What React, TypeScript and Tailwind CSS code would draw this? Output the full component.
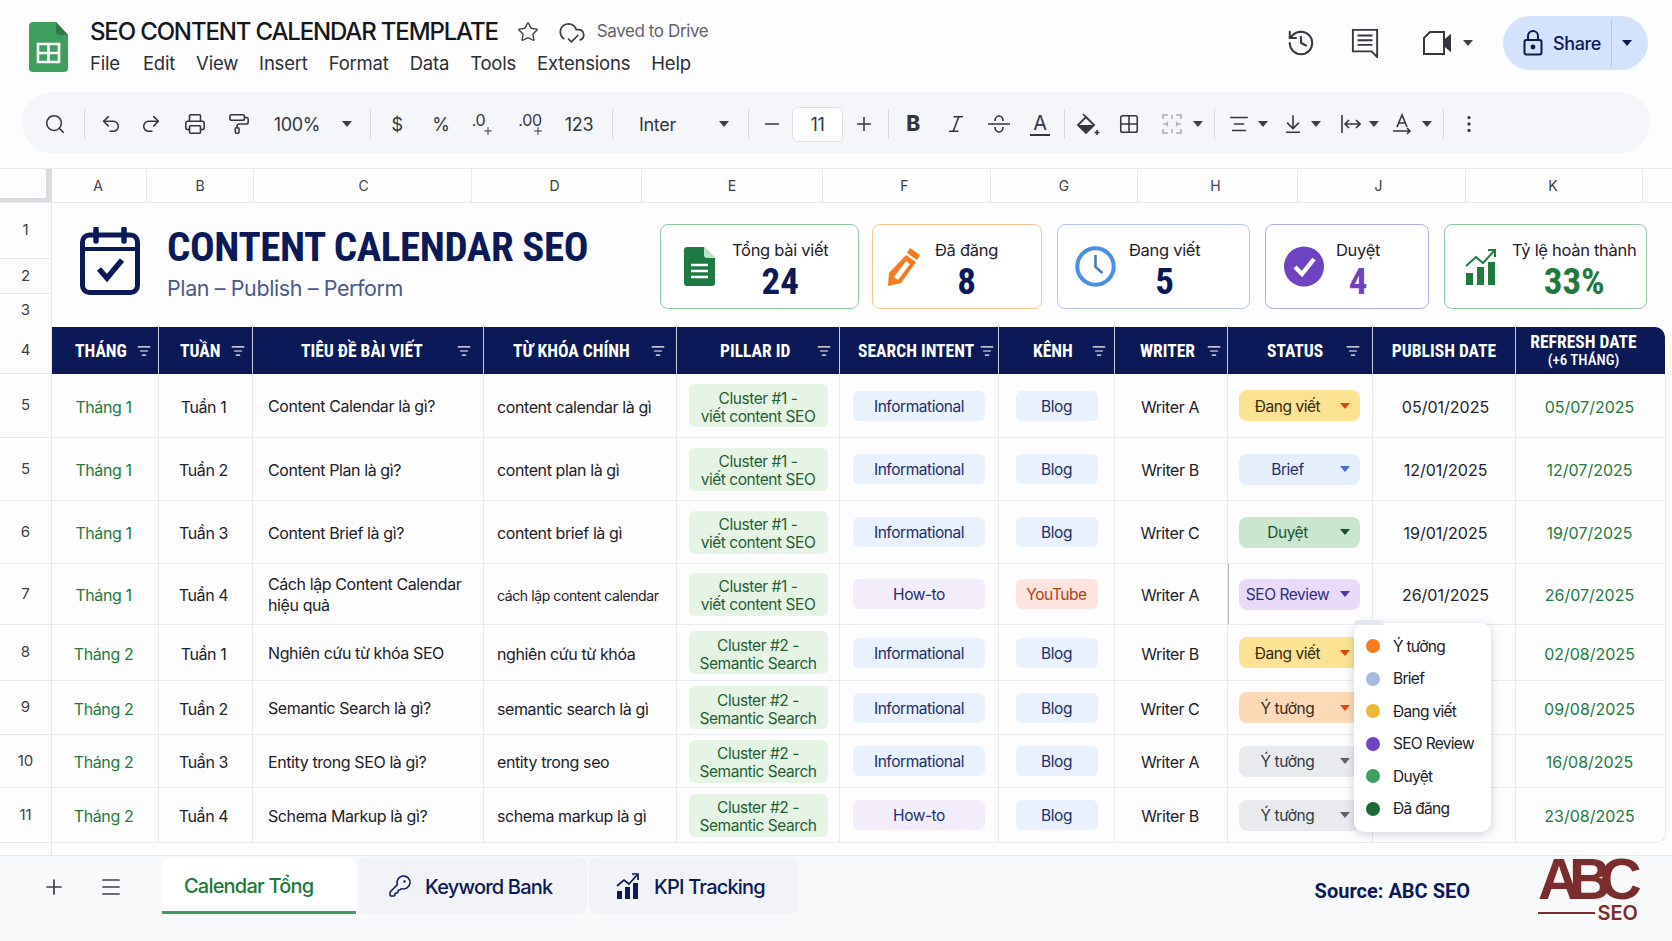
import type { ReactNode } from "react";
import {
  ArrowDownToLine,
  AlignCenter,
  CloudCheck,
  EllipsisVertical,
  Grid2x2,
  History,
  Italic,
  KeyRound,
  ListFilter,
  Menu,
  Minus,
  PaintRoller,
  Plus,
  Printer,
  Redo2,
  Search,
  Star,
  Undo2,
} from "lucide-react";

const NARROW = "font-['Roboto',sans-serif] font-bold [font-stretch:75%]";
const NAVY = "text-[#0b1a57]";

function Caret({ className = "text-[#3c4043]" }: { className?: string }) {
  return (
    <svg viewBox="0 0 10 6" className={`h-[6px] w-[10px] flex-none ${className}`}>
      <path d="M0 0h10L5 6z" fill="currentColor" />
    </svg>
  );
}

function Sep({ className }: { className: string }) {
  return (
    <div className={`flex h-full flex-none items-center justify-center ${className}`}>
      <div className="h-[30px] w-px bg-[#d7dae0]" />
    </div>
  );
}

function Tool({ className, children }: { className: string; children: ReactNode }) {
  return <div className={`flex h-full flex-none items-center justify-center text-[#33373d] ${className}`}>{children}</div>;
}

function Toolbar() {
  const ic = { size: 22, strokeWidth: 1.7 };
  return (
    <div className="mx-[22px] flex h-[61px] items-center rounded-full bg-[#f5f6f9] pl-[18px] pt-[3px] text-[18px] tracking-[-0.3px]">
      <Tool className="w-[30px]"><Search {...ic} /></Tool>
      <Sep className="w-[28px]" />
      <Tool className="w-[26px]"><Undo2 {...ic} /></Tool>
      <Tool className="ml-[7px] w-[40px]"><Redo2 {...ic} /></Tool>
      <Tool className="ml-[2px] w-[44px]"><Printer {...ic} /></Tool>
      <Tool className="w-[44px]"><PaintRoller {...ic} /></Tool>
      <Tool className="w-[72px]">100%</Tool>
      <Tool className="w-[28px]"><Caret /></Tool>
      <Sep className="w-[18px]" />
      <Tool className="w-[36px]">$</Tool>
      <Tool className="w-[52px]">%</Tool>
      <Tool className="w-[32px]">
        <span className="flex items-start text-[16px] leading-none">.0<Plus size={12} strokeWidth={2} className="mt-[13px] -ml-[3px]" /></span>
      </Tool>
      <Tool className="w-[64px]">
        <span className="flex items-start text-[16px] leading-none">.00<Plus size={12} strokeWidth={2} className="mt-[13px] -ml-[10px]" /></span>
      </Tool>
      <Tool className="w-[32px]">123</Tool>
      <Sep className="w-[34px]" />
      <Tool className="w-[74px] justify-start pl-[10px]">Inter</Tool>
      <Tool className="w-[42px]"><Caret /></Tool>
      <Sep className="w-[6px]" />
      <Tool className="w-[41px]"><Minus {...ic} /></Tool>
      <div className="flex h-[35px] w-[51px] flex-none items-center justify-center rounded-md border border-[#dcdfe4] bg-white text-[#33373d]">11</div>
      <Tool className="w-[42px]"><Plus {...ic} /></Tool>
      <Sep className="w-[6px]" />
      <Tool className="w-[44px] text-[21px] font-extrabold">B</Tool>
      <Tool className="w-[42px]"><Italic {...ic} /></Tool>
      <Tool className="w-[44px]">
        <svg viewBox="0 0 24 24" className="h-[24px] w-[24px]" fill="none" stroke="currentColor" strokeWidth="1.7">
          <path d="M8 9a4 5 0 0 1 8 0M1 12h22M8 15a4 5 0 0 0 8 0" />
        </svg>
      </Tool>
      <Tool className="w-[38px]">
        <span className="border-b-2 border-[#33373d] px-[3px] text-[20px] leading-[22px]">A</span>
      </Tool>
      <Sep className="w-[10px]" />
      <Tool className="w-[38px]">
        <svg viewBox="0 0 24 24" className="h-[24px] w-[24px]">
          <path d="M10 5l8 8-8 8-8-8z" fill="none" stroke="currentColor" strokeWidth="1.8" />
          <path d="M2 13h16l-8 8z" fill="currentColor" />
          <path d="M7 2l3 3M21 18v5M18.5 20.5h5" fill="none" stroke="currentColor" strokeWidth="1.6" />
        </svg>
      </Tool>
      <Tool className="w-[44px]"><Grid2x2 {...ic} /></Tool>
      <Tool className="w-[42px]">
        <svg viewBox="0 0 22 22" className="h-[22px] w-[22px] text-[#aab0be]" fill="none" stroke="currentColor" strokeWidth="1.6">
          <path d="M2 6V2h5M15 2h5v4M20 16v4h-5M7 20H2v-4M2 11h5M15 11h5M11 2v4M11 16v4M5 11l2-2M5 11l2 2M17 11l-2-2M17 11l-2 2" />
        </svg>
      </Tool>
      <Tool className="w-[10px]"><Caret /></Tool>
      <Sep className="w-[22px]" />
      <Tool className="w-[28px]"><AlignCenter {...ic} /></Tool>
      <Tool className="w-[20px]"><Caret /></Tool>
      <Tool className="ml-[2px] w-[36px]"><ArrowDownToLine {...ic} /></Tool>
      <Tool className="w-[10px]"><Caret /></Tool>
      <Tool className="ml-[14px] w-[30px]">
        <svg viewBox="0 0 22 22" className="h-[22px] w-[22px]" fill="none" stroke="currentColor" strokeWidth="1.6">
          <path d="M3 2v18M7 11h13M10 7l-4 4 4 4M17 7l4 4-4 4" />
        </svg>
      </Tool>
      <Tool className="w-[18px]"><Caret /></Tool>
      <Tool className="w-[38px]">
        <svg viewBox="0 0 22 22" className="h-[22px] w-[22px]" fill="none" stroke="currentColor" strokeWidth="1.6">
          <path d="M6 14L11 2l5 12M7.5 10h7M2 18h17M16 15l3 3-3 3" />
        </svg>
      </Tool>
      <Tool className="w-[12px]"><Caret /></Tool>
      <Sep className="w-[20px]" />
      <Tool className="w-[32px]"><EllipsisVertical {...ic} /></Tool>
    </div>
  );
}

function TopBar() {
  const menu = ["Edit", "View", "Insert", "Format", "Data", "Tools", "Extensions", "Help"];
  return (
    <header className="flex h-[92px] items-start pl-[29px] pr-[24px] pt-[16px]">
      <svg viewBox="0 0 39 50" className="mt-[6px] h-[50px] w-[39px] flex-none">
        <path d="M4 0h23l12 13v33a4 4 0 0 1-4 4H4a4 4 0 0 1-4-4V4a4 4 0 0 1 4-4z" fill="#3f9f5f" />
        <path d="M27 0l12 13H30a3 3 0 0 1-3-3z" fill="#2c7a47" />
        <path d="M9 22h21v18H9z" fill="none" stroke="#fff" strokeWidth="2.6" />
        <path d="M19.5 22v18M9 31h21" stroke="#fff" strokeWidth="2.6" />
      </svg>
      <div className="ml-[22px]">
        <div className="flex h-[32px] items-center">
          <span className="text-[24px] font-medium tracking-[-1.15px] text-[#15171c]">SEO CONTENT CALENDAR TEMPLATE</span>
          <Star size={22} strokeWidth={1.5} className="ml-[19px] text-[#3c4043]" />
          <CloudCheck size={28} strokeWidth={1.5} className="ml-[19px] text-[#3c4043]" />
          <span className="ml-[11px] text-[17px] tracking-[-0.4px] text-[#5f6368]">Saved to Drive</span>
        </div>
        <nav className="mt-[2px] flex gap-[21px] text-[18.5px] tracking-[-0.2px] text-[#2b2f36]">
          <span className="mr-[2px]">File</span>
          {menu.map((m) => (
            <span key={m}>{m}</span>
          ))}
        </nav>
      </div>
      <div className="ml-auto flex items-center text-[#33373d]">
        <History size={30} strokeWidth={1.6} />
        <svg viewBox="0 0 30 32" className="ml-[35px] h-[30px] w-[28px]" fill="none" stroke="currentColor" strokeWidth="2">
          <path d="M2 2h26v29l-6-6H2z" />
          <path d="M7 8h16M7 13h16M7 18h16" />
        </svg>
        <svg viewBox="0 0 28 24" className="ml-[44px] h-[24px] w-[28px]" fill="none" stroke="currentColor" strokeWidth="2">
          <path d="M7 1h14v22H1V7z" />
          <path d="M21 10l6-5v14l-6-5z" fill="currentColor" />
        </svg>
        <Caret className="ml-[12px] text-[#3c4043]" />
        <div className={`ml-[30px] flex h-[54px] w-[145px] items-center rounded-full bg-[#d3e3fd] pl-[20px] ${NAVY}`}>
          <svg viewBox="0 0 20 26" className="h-[26px] w-[20px] flex-none" fill="none" stroke="currentColor" strokeWidth="2">
            <rect x="1.5" y="10" width="17" height="14.5" rx="2" />
            <path d="M5 10V6a5 5 0 0 1 10 0v4" />
            <circle cx="10" cy="17" r="1.4" fill="currentColor" />
          </svg>
          <span className="ml-[10px] text-[18px] font-medium tracking-[-0.4px]">Share</span>
          <div className="ml-[10px] h-[48px] w-px bg-[#b7c7e2]" />
          <Caret className={`ml-[10px] ${NAVY}`} />
        </div>
      </div>
    </header>
  );
}

function ColumnLetters() {
  const cols = [
    ["A", "w-[95px] pr-[2px]"],
    ["B", "w-[107px]"],
    ["C", "w-[218px] pl-[2px]"],
    ["D", "w-[170px] pr-[4px]"],
    ["E", "w-[181px]"],
    ["F", "w-[168px] pr-[4px]"],
    ["G", "w-[147px]"],
    ["H", "w-[160px] pr-[4px]"],
    ["J", "w-[168px] pr-[6px]"],
    ["K", "w-[177px] pr-[2px]"],
  ];
  return (
    <div className="mt-[15px] flex h-[35px] border-y border-[#e6e8ec] text-[14px] text-[#3c4043]">
      <div className="h-full w-[52px] flex-none border-r-[6px] border-b-[4px] border-[#d8dbe0]" />
      {cols.map(([c, w]) => (
        <div key={c} className={`flex flex-none items-center justify-center border-r border-[#e6e8ec] ${w}`}>
          {c}
        </div>
      ))}
    </div>
  );
}

function RowNum({ n, className }: { n: number; className: string }) {
  return (
    <div className={`flex w-[52px] flex-none items-center justify-center border-r border-b border-[#e6e8ec] text-[15px] text-[#3c4043] ${className}`}>
      {n}
    </div>
  );
}

type Kpi = { label: string; value: string; tone: string; cls: string; icon: ReactNode };

const kpis: Kpi[] = [
  {
    label: "Tổng bài viết",
    value: "24",
    tone: NAVY,
    cls: "mr-[13px] w-[199px] border-[#8fc9a1] pl-[23px]",
    icon: (
      <svg viewBox="0 0 31 39" className="mr-[17px] h-[39px] w-[31px] flex-none">
        <path d="M3 0h17l11 11v25a3 3 0 0 1-3 3H3a3 3 0 0 1-3-3V3a3 3 0 0 1 3-3z" fill="#1e7a42" />
        <path d="M20 0l11 11h-8a3 3 0 0 1-3-3z" fill="#bfe0ca" />
        <path d="M7 18h17M7 24h17M7 30h17" stroke="#fff" strokeWidth="2.6" />
      </svg>
    ),
  },
  {
    label: "Đã đăng",
    value: "8",
    tone: NAVY,
    cls: "mr-[15px] w-[170px] border-[#f9c58d] pl-[13px]",
    icon: (
      <svg viewBox="0 0 35 39" className="mr-[14px] h-[39px] w-[35px] flex-none">
        <path d="M24 1l10 7-3 5-10-7z" fill="#f47b20" />
        <path d="M20 8l10 7-15 21-13 3 1-13z" fill="#f47b20" />
        <path d="M20 14l4 3-12 16-4-3z" fill="#fff" />
      </svg>
    ),
  },
  {
    label: "Đang viết",
    value: "5",
    tone: NAVY,
    cls: "mr-[15px] w-[193px] border-[#b6c5e6] pl-[17px]",
    icon: (
      <svg viewBox="0 0 41 41" className="mr-[13px] h-[41px] w-[41px] flex-none" fill="none">
        <circle cx="20.5" cy="20.5" r="18.2" stroke="#4a90e2" strokeWidth="4" />
        <path d="M20.5 9v12l7 6" stroke="#4a78c2" strokeWidth="2.6" />
      </svg>
    ),
  },
  {
    label: "Duyệt",
    value: "4",
    tone: "text-[#6f42c1]",
    cls: "mr-[15px] w-[164px] border-[#b5aedb] pl-[18px]",
    icon: (
      <svg viewBox="0 0 40 41" className="mr-[12px] h-[41px] w-[40px] flex-none" fill="none">
        <circle cx="20" cy="20.5" r="20" fill="#6f42c1" />
        <path d="M11 21l7 7 12-15" stroke="#fff" strokeWidth="4.4" />
      </svg>
    ),
  },
  {
    label: "Tỷ lệ hoàn thành",
    value: "33%",
    tone: "text-[#1f7a3d]",
    cls: "w-[203px] border-[#8fc9a1] pl-[20px]",
    icon: (
      <svg viewBox="0 0 32 36" className="mr-[15px] h-[36px] w-[32px] flex-none" fill="none">
        <path d="M1 17L11 8l7 6L29 2" stroke="#1f7a3d" strokeWidth="2" />
        <path d="M23 1h7v7" stroke="#1f7a3d" strokeWidth="2" />
        <path d="M1 24h7v12H1zM12 18h7v18h-7zM23 13h7v23h-7z" fill="#1f7a3d" />
      </svg>
    ),
  },
];

function TitleBlock() {
  return (
    <div className="flex h-[124px]">
      <div className="flex-none">
        <RowNum n={1} className="h-[56px]" />
        <RowNum n={2} className="h-[35px]" />
        <RowNum n={3} className="h-[33px] border-b-0" />
      </div>
      <div className="flex flex-1 items-center pr-[25px]">
        <svg viewBox="0 0 60 68" className="mb-[8px] ml-[28px] h-[68px] w-[60px] flex-none text-[#0b1a57]" fill="none" stroke="currentColor">
          <rect x="2.5" y="8" width="55" height="57.5" rx="7" strokeWidth="5" />
          <path d="M3 22h54" strokeWidth="4" />
          <path d="M16 2v12M44 2v12" strokeWidth="5.5" strokeLinecap="round" />
          <path d="M19 42l8 9 15-18" strokeWidth="5.5" />
        </svg>
        <div className="mb-[4px] ml-[27px]">
          <div className={`text-[41px] leading-[44px] tracking-[-0.4px] ${NARROW} ${NAVY}`}>CONTENT CALENDAR SEO</div>
          <div className="mt-[5px] text-[21.5px] leading-[28px] tracking-[-0.4px] text-[#4a5a8a]">Plan – Publish – Perform</div>
        </div>
        <div className="ml-auto mt-[3px] flex">
          {kpis.map((k) => (
            <div key={k.label} className={`flex h-[85px] flex-none items-center rounded-lg border bg-white ${k.cls}`}>
              {k.icon}
              <div className="flex flex-col items-center pt-[5px]">
                <div className="text-[16.5px] leading-[24px] tracking-[-0.3px] text-[#1d2128]">{k.label}</div>
                <div className={`mt-[1px] text-[37px] leading-[38px] ${NARROW} ${k.tone}`}>{k.value}</div>
              </div>
            </div>
          ))}
        </div>
      </div>
    </div>
  );
}

const headers = [
  { label: "THÁNG", w: "w-[107px]", cls: "pl-[23px] pr-[7px]" },
  { label: "TUẦN", w: "w-[94px]", cls: "pl-[21px] pr-[7px]" },
  { label: "TIÊU ĐỀ BÀI VIẾT", w: "w-[231px]", cls: "pl-[48px] pr-[12px]" },
  { label: "TỪ KHÓA CHÍNH", w: "w-[193px]", cls: "pl-[29px] pr-[11px]" },
  { label: "PILLAR ID", w: "w-[163px]", cls: "pl-[43px] pr-[8px]" },
  { label: "SEARCH INTENT", w: "w-[159px]", cls: "pl-[18px] pr-[4px]" },
  { label: "KÊNH", w: "w-[116px]", cls: "pl-[34px] pr-[8px]" },
  { label: "WRITER", w: "w-[113px]", cls: "pl-[25px] pr-[6px]" },
  { label: "STATUS", w: "w-[145px]", cls: "pl-[39px] pr-[12px]" },
];

function TableHeader() {
  return (
    <div className="flex h-[47px]">
      <RowNum n={4} className="h-full" />
      <div className={`flex overflow-hidden rounded-t-[10px] rounded-tl-none bg-[#0b1a57] text-[17.5px] text-white ${NARROW}`}>
        {headers.map((h) => (
          <div key={h.label} className={`flex flex-none items-center justify-between border-r border-[#c8cfe2] ${h.w} ${h.cls}`}>
            <span className="whitespace-nowrap pt-[1px]">{h.label}</span>
            <ListFilter size={14} strokeWidth={2} className="flex-none" />
          </div>
        ))}
        <div className="flex w-[143px] flex-none items-center justify-center border-r border-[#c8cfe2] pt-[1px]">PUBLISH DATE</div>
        <div className="flex w-[149px] flex-none flex-col items-center justify-center pr-[14px] leading-[18px]">
          <span>REFRESH DATE</span>
          <span className="text-[15px] font-medium">(+6 THÁNG)</span>
        </div>
      </div>
    </div>
  );
}

type StatusKey = "dang" | "brief" | "duyet" | "seo" | "ytuong" | "gray";

const statusStyles: Record<StatusKey, { label: string; bg: string; caret: string }> = {
  dang: { label: "Đang viết", bg: "bg-[#fde293] text-[#33290a]", caret: "text-[#d9480f]" },
  brief: { label: "Brief", bg: "bg-[#e5eefb] text-[#1e2f6b]", caret: "text-[#4a6fc7]" },
  duyet: { label: "Duyệt", bg: "bg-[#c9e7cf] text-[#14532d]", caret: "text-[#14532d]" },
  seo: { label: "SEO Review", bg: "bg-[#ead9fb] text-[#2c2f7a]", caret: "text-[#4f35a8]" },
  ytuong: { label: "Ý tưởng", bg: "bg-[#fdd9b5] text-[#3a2a1a]", caret: "text-[#d9480f]" },
  gray: { label: "Ý tưởng", bg: "bg-[#e8eaed] text-[#333842]", caret: "text-[#5f6368]" },
};

type Row = {
  num: number;
  h: string;
  month: string;
  week: string;
  title: string[];
  keyword: string;
  pillar: string[];
  intent: string;
  channel: string;
  writer: string;
  status: StatusKey;
  publish: string;
  refresh: string;
};

const c1 = ["Cluster #1 -", "viết content SEO"];
const c2 = ["Cluster #2 -", "Semantic Search"];

const rows: Row[] = [
  { num: 5, h: "h-[64px]", month: "Tháng 1", week: "Tuần 1", title: ["Content Calendar là gì?"], keyword: "content calendar là gì", pillar: c1, intent: "Informational", channel: "Blog", writer: "Writer A", status: "dang", publish: "05/01/2025", refresh: "05/07/2025" },
  { num: 5, h: "h-[63px]", month: "Tháng 1", week: "Tuần 2", title: ["Content Plan là gì?"], keyword: "content plan là gì", pillar: c1, intent: "Informational", channel: "Blog", writer: "Writer B", status: "brief", publish: "12/01/2025", refresh: "12/07/2025" },
  { num: 6, h: "h-[63px]", month: "Tháng 1", week: "Tuần 3", title: ["Content Brief là gì?"], keyword: "content brief là gì", pillar: c1, intent: "Informational", channel: "Blog", writer: "Writer C", status: "duyet", publish: "19/01/2025", refresh: "19/07/2025" },
  { num: 7, h: "h-[61px]", month: "Tháng 1", week: "Tuần 4", title: ["Cách lập Content Calendar", "hiệu quả"], keyword: "cách lập content calendar", pillar: c1, intent: "How-to", channel: "YouTube", writer: "Writer A", status: "seo", publish: "26/01/2025", refresh: "26/07/2025" },
  { num: 8, h: "h-[56px]", month: "Tháng 2", week: "Tuần 1", title: ["Nghiên cứu từ khóa SEO"], keyword: "nghiên cứu từ khóa", pillar: c2, intent: "Informational", channel: "Blog", writer: "Writer B", status: "dang", publish: "", refresh: "02/08/2025" },
  { num: 9, h: "h-[54px]", month: "Tháng 2", week: "Tuần 2", title: ["Semantic Search là gì?"], keyword: "semantic search là gì", pillar: c2, intent: "Informational", channel: "Blog", writer: "Writer C", status: "ytuong", publish: "", refresh: "09/08/2025" },
  { num: 10, h: "h-[53px]", month: "Tháng 2", week: "Tuần 3", title: ["Entity trong SEO là gì?"], keyword: "entity trong seo", pillar: c2, intent: "Informational", channel: "Blog", writer: "Writer A", status: "gray", publish: "", refresh: "16/08/2025" },
  { num: 11, h: "h-[55px]", month: "Tháng 2", week: "Tuần 4", title: ["Schema Markup là gì?"], keyword: "schema markup là gì", pillar: c2, intent: "How-to", channel: "Blog", writer: "Writer B", status: "gray", publish: "", refresh: "23/08/2025" },
];

const CELL = "flex flex-none items-center border-r border-[#e8eaf0]";
const TXT = "pt-[2px] tracking-[-0.4px]";

function TableRow({ row, last }: { row: Row; last: boolean }) {
  const st = statusStyles[row.status];
  return (
    <div className={`flex ${row.h}`}>
      <RowNum n={row.num} className="h-full" />
      <div className={`flex border-b border-[#e8eaf0] text-[16px] text-[#1d2128] ${last ? "rounded-br-[10px] border-r" : "border-r"}`}>
        <div className={`${CELL} ${TXT} w-[107px] justify-center pr-[3px] text-[#1f7a3d]`}>{row.month}</div>
        <div className={`${CELL} ${TXT} w-[94px] justify-center pr-[4px]`}>{row.week}</div>
        <div className={`${CELL} ${TXT} w-[231px] pl-[15px] leading-[21px]`}>
          <div>
            {row.title.map((t) => (
              <div key={t}>{t}</div>
            ))}
          </div>
        </div>
        <div className={`${CELL} ${TXT} w-[193px] whitespace-nowrap pl-[13px] ${row.num === 7 ? "text-[14px]" : ""}`}>{row.keyword}</div>
        <div className={`${CELL} w-[163px] justify-center`}>
          <div className="flex h-[43px] w-[139px] flex-col items-center justify-center rounded-md bg-[#e6f4e6] pt-[4px] text-[15.5px] leading-[18px] tracking-[-0.45px] text-[#1f5f33]">
            {row.pillar.map((p) => (
              <div key={p}>{p}</div>
            ))}
          </div>
        </div>
        <div className={`${CELL} w-[159px] justify-center`}>
          <div className={`flex h-[30px] w-[132px] items-center justify-center rounded-md pt-[2px] text-[15.5px] tracking-[-0.45px] text-[#1e2f6b] ${row.intent === "How-to" ? "bg-[#f2ecfb]" : "bg-[#e8f1fc]"}`}>
            {row.intent}
          </div>
        </div>
        <div className={`${CELL} w-[116px] justify-center`}>
          <div className={`flex h-[30px] w-[82px] items-center justify-center rounded-md pt-[2px] text-[15.5px] tracking-[-0.45px] ${row.channel === "YouTube" ? "bg-[#ffe3df] text-[#b5400f]" : "bg-[#e8f1fc] text-[#1e2f6b]"}`}>
            {row.channel}
          </div>
        </div>
        <div className={`${CELL} ${TXT} w-[113px] justify-center pr-[2px]`}>{row.writer}</div>
        <div className={`${CELL} w-[145px] justify-center pr-[2px] ${row.status === "seo" ? "border-l border-l-[#a9afbb]" : ""}`}>
          <div className={`flex h-[31px] w-[121px] items-center rounded-lg pr-[10px] text-[15.5px] tracking-[-0.45px] ${st.bg} ${row.status === "seo" ? "-ml-px" : ""}`}>
            <span className="flex-1 whitespace-nowrap pr-[3px] pt-[2px] text-center">{st.label}</span>
            <Caret className={st.caret} />
          </div>
        </div>
        <div className={`${CELL} w-[143px] justify-center pl-[3px] pt-[2px]`}>{row.publish}</div>
        <div className="flex w-[149px] flex-none items-center justify-center pr-[2px] pt-[2px] text-[#1f7a3d]">{row.refresh}</div>
      </div>
    </div>
  );
}

function StatusMenu() {
  const items = [
    ["Ý tưởng", "bg-[#f97b1f]"],
    ["Brief", "bg-[#a8b9e0]"],
    ["Đang viết", "bg-[#efb836]"],
    ["SEO Review", "bg-[#6f42c1]"],
    ["Duyệt", "bg-[#3d9f60]"],
    ["Đã đăng", "bg-[#1d6b34]"],
  ];
  return (
    <div className="absolute left-[1354px] top-[623px] flex h-[209px] w-[137px] flex-col justify-center rounded-[10px] bg-white pl-[12px] shadow-[0_2px_10px_rgba(30,40,80,0.22)]">
      <div className="absolute -top-[3px] left-0 h-[5px] w-[30px] rounded-t-md bg-[#e3e6ec]" />
      {items.map(([label, dot]) => (
        <div key={label} className="flex h-[32.5px] items-center text-[15.5px] tracking-[-0.7px] text-[#1d2128]">
          <span className={`h-[14px] w-[14px] flex-none rounded-full ${dot}`} />
          <span className="ml-[13px] whitespace-nowrap">{label}</span>
        </div>
      ))}
    </div>
  );
}

function TabBar() {
  return (
    <footer className="flex h-[86px] items-start border-t border-[#e6e8ec] bg-[#f8f9fb]">
      <Plus size={24} strokeWidth={1.7} className="ml-[42px] mt-[19px] flex-none text-[#3c4043]" />
      <Menu size={24} strokeWidth={1.7} className="ml-[33px] mt-[19px] flex-none text-[#3c4043]" />
      <div className="ml-[39px] mt-[2px] flex h-[56px] w-[194px] flex-none items-center rounded-t-lg border-b-[3px] border-[#3d9f60] bg-white pl-[22px] pt-[2px] text-[20px] font-medium tracking-[-0.8px] text-[#1a7a3a]">
        Calendar Tổng
      </div>
      <div className={`ml-[2px] mt-[2px] flex h-[56px] w-[229px] flex-none items-center rounded-lg bg-[#f1f3f6] pl-[30px] text-[20px] font-medium tracking-[-0.8px] ${NAVY}`}>
        <KeyRound size={24} strokeWidth={1.5} />
        <span className="ml-[13px] pt-[2px]">Keyword Bank</span>
      </div>
      <div className={`ml-[2px] mt-[2px] flex h-[56px] w-[210px] flex-none items-center rounded-lg bg-[#f1f3f6] pl-[27px] text-[20px] font-medium tracking-[-0.8px] ${NAVY}`}>
        <svg viewBox="0 0 24 26" className="h-[26px] w-[24px] flex-none" fill="none">
          <path d="M1 13l7-6 5 4 8-9" stroke="currentColor" strokeWidth="1.7" />
          <path d="M16 1h6v6" stroke="currentColor" strokeWidth="1.7" />
          <path d="M1 18h5v8H1zM9 14h5v12H9zM17 10h5v16h-5z" fill="currentColor" />
        </svg>
        <span className="ml-[14px] pt-[2px]">KPI Tracking</span>
      </div>
      <div className={`ml-auto mt-[20px] font-['Roboto',sans-serif] text-[20px] font-bold ${NAVY}`}>Source: ABC SEO</div>
      <div className="ml-[68px] mr-[34px] mt-[1px] w-[100px] flex-none text-[#7b2d2d]">
        <div className="whitespace-nowrap font-['Liberation_Sans',sans-serif] text-[58px] font-bold leading-[44px] tracking-[-11px]">ABC</div>
        <div className="mt-[2px] flex items-center">
          <div className="h-[2px] flex-1 bg-[#7b2d2d]" />
          <span className="ml-[3px] text-[20px] font-semibold leading-[20px]">SEO</span>
        </div>
      </div>
    </footer>
  );
}

export default function App() {
  return (
    <div className="relative h-[941px] w-[1672px] overflow-hidden bg-[#fdfdfe] font-['Inter',sans-serif]">
      <TopBar />
      <Toolbar />
      <ColumnLetters />
      <TitleBlock />
      <TableHeader />
      {rows.map((r, i) => (
        <TableRow key={`${r.num}-${r.week}-${r.month}`} row={r} last={i === rows.length - 1} />
      ))}
      <div className="h-[12px] w-[52px] border-r border-[#e6e8ec]" />
      <TabBar />
      <StatusMenu />
    </div>
  );
}
